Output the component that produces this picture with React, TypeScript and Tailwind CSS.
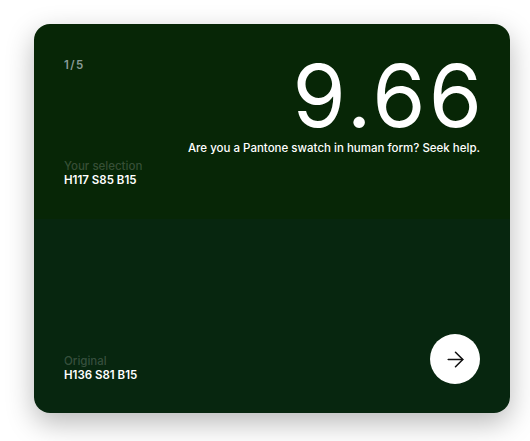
import React from 'react'
import { ArrowRight } from 'lucide-react'

const round = {
  index: 1,
  total: 5,
  score: '9.66',
  verdict: 'Are you a Pantone swatch in human form? Seek help.',
  selection: 'H117 S85 B15',
  original: 'H136 S81 B15',
}

function App() {
  return (
    <div className="min-h-screen bg-white pt-[24px] pl-[34px] font-['Inter',sans-serif]">
      <div className="w-[476px] h-[389px] rounded-[16px] overflow-hidden grid grid-rows-2 shadow-[0_10px_28px_rgba(0,0,0,0.28)]">
        <div className="bg-[#072606] px-[30px] pt-[29px] pb-[31px] flex flex-col min-h-0">
          <div className="flex justify-between items-start">
            <p className="text-[11.5px] leading-[16px] font-semibold text-[#8a9b98] pt-[4px] tracking-[0.12em]">
              {round.index}/{round.total}
            </p>
            <div className="flex flex-col items-end">
              <h1 className="text-[86px] leading-none font-normal text-white tracking-[0.035em] mr-[-5px]">{round.score}</h1>
              <p className="text-[11.5px] leading-[16px] font-medium text-white mt-[1px]">{round.verdict}</p>
            </div>
          </div>
          <div className="mt-auto">
            <p className="text-[11.5px] leading-[14px] font-medium text-white/20">Your selection</p>
            <p className="text-[11.5px] leading-[15px] font-semibold text-white">{round.selection}</p>
          </div>
        </div>
        <div className="bg-[#07260f] px-[30px] pb-[29px] flex items-end justify-between min-h-0">
          <div className="pb-[1px]">
            <p className="text-[11.5px] leading-[14px] font-medium text-white/20">Original</p>
            <p className="text-[11.5px] leading-[15px] font-semibold text-white">{round.original}</p>
          </div>
          <button className="w-[50px] h-[50px] rounded-full bg-white flex items-center justify-center text-[#111]">
            <ArrowRight size={25} strokeWidth={1.5} />
          </button>
        </div>
      </div>
    </div>
  )
}

export default App
